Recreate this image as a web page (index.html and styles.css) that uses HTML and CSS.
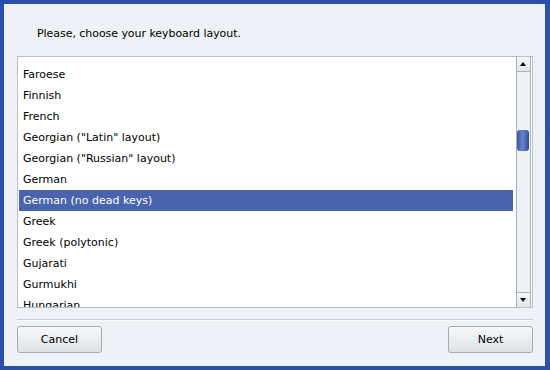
FILE: index.html
```html
<!DOCTYPE html>
<html lang="en">
<head>
    <meta charset="UTF-8">
    <title>Keyboard layout</title>
    <link rel="stylesheet" href="styles.css">
</head>
<body>
    <div class="window">
        <p class="prompt">Please, choose your keyboard layout.</p>

        <div class="listbox">
            <div class="items">
                <div class="item">Faroese</div>
                <div class="item">Finnish</div>
                <div class="item">French</div>
                <div class="item">Georgian ("Latin" layout)</div>
                <div class="item">Georgian ("Russian" layout)</div>
                <div class="item">German</div>
                <div class="item selected">German (no dead keys)</div>
                <div class="item">Greek</div>
                <div class="item">Greek (polytonic)</div>
                <div class="item">Gujarati</div>
                <div class="item">Gurmukhi</div>
                <div class="item">Hungarian</div>
            </div>
            <div class="scrollbar">
                <div class="arrow up"></div>
                <div class="track">
                    <div class="thumb"></div>
                </div>
                <div class="arrow down"></div>
            </div>
        </div>

        <div class="separator"></div>

        <div class="buttons">
            <button class="btn">Cancel</button>
            <button class="btn">Next</button>
        </div>
    </div>
</body>
</html>
```

FILE: styles.css
```css
* {
    margin: 0;
    padding: 0;
    box-sizing: border-box;
}

body {
    font-family: 'DejaVu Sans', sans-serif;
    font-size: 11px;
    color: #000;
    background: #2a50ab;
}

.window {
    width: 550px;
    height: 370px;
    background: #eef1f5;
    border-style: solid;
    border-color: #2a50ab;
    border-width: 4px 5px 4px 4px;
    padding: 23px 12px 0 13px;
    display: flex;
    flex-direction: column;
}

.prompt {
    line-height: 13px;
    padding-left: 20px;
    margin-bottom: 16px;
    letter-spacing: -0.05px;
}

.listbox {
    height: 252px;
    width: 516px;
    background: #fff;
    border: 1px solid #b9c0c8;
    display: flex;
}

.items {
    flex: 1;
    overflow: hidden;
    padding: 7px 3px 0 1px;
}

.item {
    height: 21px;
    line-height: 21px;
    padding-left: 4px;
    white-space: nowrap;
}

.item.selected {
    background: #4a63ae;
    color: #fff;
}

.scrollbar {
    width: 15px;
    margin-right: 1px;
    display: flex;
    flex-direction: column;
    border-left: 1px solid #a8b0b8;
    border-right: 1px solid #a8b0b8;
    background: #eef1f5;
}

.arrow {
    height: 15px;
    background: linear-gradient(#f6f7f9, #e2e6ea);
    position: relative;
}

.arrow.up {
    border-bottom: 1px solid #a8b0b8;
}

.arrow.down {
    border-top: 1px solid #a8b0b8;
}

.arrow::after {
    content: '';
    position: absolute;
    left: 3px;
    top: 5px;
    border-left: 3.5px solid transparent;
    border-right: 3.5px solid transparent;
}

.arrow.up::after {
    border-bottom: 4px solid #000;
}

.arrow.down::after {
    border-top: 4px solid #000;
}

.track {
    flex: 1;
    padding-top: 58px;
}

.thumb {
    height: 21px;
    width: 12px;
    border-radius: 3px;
    background: linear-gradient(90deg, #3755a4 0%, #6a84c8 45%, #4a67b4 75%, #2e4b98 100%);
}

.separator {
    margin-top: 11px;
    height: 2px;
    border-top: 1px solid #c9ced4;
    border-bottom: 1px solid #fafbfc;
    width: 516px;
}

.buttons {
    margin-top: 5px;
    width: 516px;
    display: flex;
    justify-content: space-between;
}

.btn {
    width: 85px;
    height: 27px;
    font-family: inherit;
    font-size: 11px;
    color: #000;
    border: 1px solid #a6abb1;
    border-radius: 3px;
    background: linear-gradient(#f7f8f9, #dfe2e5);
}
```
